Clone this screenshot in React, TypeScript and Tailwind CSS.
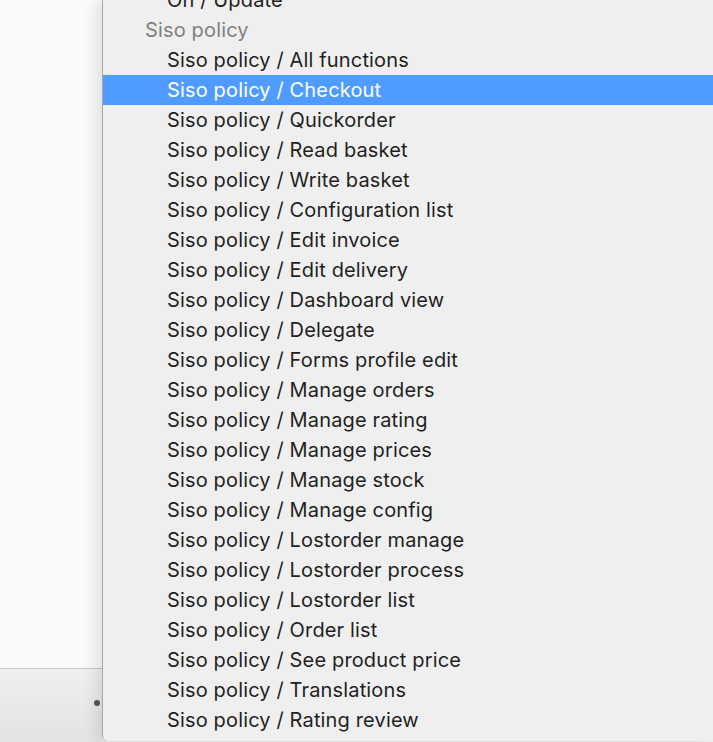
const items = [
  'All functions',
  'Checkout',
  'Quickorder',
  'Read basket',
  'Write basket',
  'Configuration list',
  'Edit invoice',
  'Edit delivery',
  'Dashboard view',
  'Delegate',
  'Forms profile edit',
  'Manage orders',
  'Manage rating',
  'Manage prices',
  'Manage stock',
  'Manage config',
  'Lostorder manage',
  'Lostorder process',
  'Lostorder list',
  'Order list',
  'See product price',
  'Translations',
  'Rating review',
];

const selected = 'Checkout';

const App = () => {
  return (
    <div className="flex h-[742px] w-[713px] overflow-hidden bg-[#ececec] font-['Inter','Helvetica_Neue',sans-serif]">
      {/* page behind the menu */}
      <div className="flex w-[102px] shrink-0 flex-col">
        <div className="h-[668px] bg-[#fafafa]" />
        <div className="flex flex-1 items-center justify-end border-t border-[#c6c6c6] bg-gradient-to-b from-[#efefef] to-[#e3e3e3] pr-[2px] pb-[6px]">
          <span className="h-[6px] w-[6px] rounded-full bg-[#555]" />
        </div>
      </div>

      {/* select dropdown */}
      <div className="relative z-10 h-[741px] flex-1 overflow-hidden rounded-bl-[6px] border-l border-[#a8a8a8] bg-[#efefef] shadow-[-6px_0_14px_rgba(0,0,0,0.10)]">
        <div className="-mt-[15px] flex flex-col text-[20px] leading-[30px] tracking-[0.15px]">
          <div className="h-[30px] pl-[64px] text-[#1f1f1f]">On / Update</div>
          <div className="h-[30px] pl-[42px] text-[#808080]">Siso policy</div>
          {items.map((item) => (
            <div
              key={item}
              className={`h-[30px] whitespace-nowrap pl-[64px] ${item === selected ? 'bg-[#4f9bff] text-white' : 'text-[#1f1f1f]'}`}
            >
              Siso policy / {item}
            </div>
          ))}
        </div>
      </div>
    </div>
  );
};

export default App;
